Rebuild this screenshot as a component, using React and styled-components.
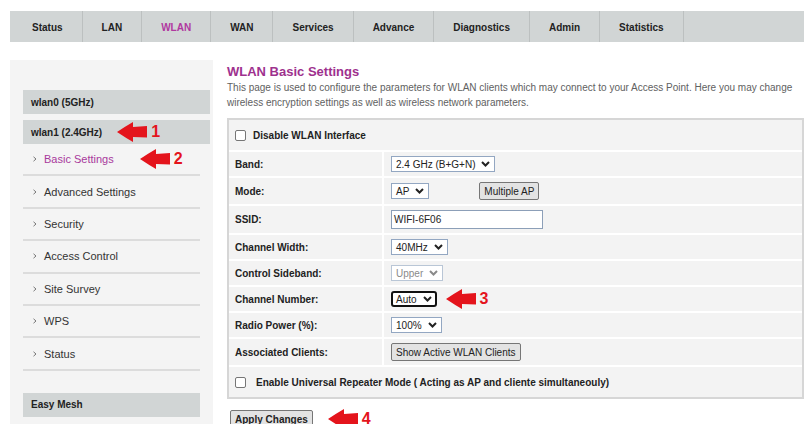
import React from 'react'
import styled, { createGlobalStyle } from 'styled-components'

const GlobalStyle = createGlobalStyle`
  html, body {
    margin: 0;
    padding: 0;
    background: #fff;
    overflow: hidden;
  }
  body {
    font-family: "Liberation Sans", Arial, sans-serif;
    font-size: 10px;
    color: #222;
  }
`

const TopNav = styled.nav`
  display: flex;
  width: 900px;
  height: 31px;
  margin: 11px 0 0 10px;
  padding-left: 3px;
  background: #d1d5d5;
`

const NavItem = styled.div`
  display: flex;
  align-items: center;
  padding: 1px 19px 0;
  border-right: 1px solid #bcc0c0;
  font-weight: bold;
  font-size: 10px;
  color: ${p => (p.$active ? '#b0389f' : '#222')};
`

const Layout = styled.div`
  display: flex;
  align-items: flex-start;
  margin-top: 18px;
  padding-left: 10px;
`

const Sidebar = styled.aside`
  width: 204px;
  min-height: 400px;
  box-sizing: border-box;
  padding: 30px 3px 0 13px;
  background: #f4f4f4;
`

const GroupHeader = styled.div`
  display: flex;
  align-items: center;
  height: 24px;
  padding-left: 8px;
  margin-top: ${p => p.$gap || 0}px;
  margin-right: ${p => p.$inset || 0}px;
  background: #d1d5d5;
  font-weight: bold;
  font-size: 10px;
  color: #222;
`

const SubList = styled.div`
  margin-right: 10px;
`

const SubItem = styled.div`
  display: flex;
  align-items: center;
  gap: 7px;
  height: 30.4px;
  padding-left: 10px;
  border-bottom: 2px solid #dcdcdc;
  font-size: 11px;
  color: ${p => (p.$active ? '#a8399c' : '#333')};
`

const Main = styled.main`
  width: 580px;
  margin-left: 14px;
  padding-top: 4px;
`

const Title = styled.h1`
  margin: 0;
  font-size: 13px;
  line-height: 16px;
  font-weight: bold;
  color: #9e318e;
`

const Intro = styled.p`
  margin: 0;
  font-size: 10px;
  line-height: 15px;
  color: #616161;
`

const Form = styled.div`
  display: grid;
  grid-template-columns: 153px 1fr;
  gap: 2px;
  margin-top: 8px;
  border: 2px solid #d6d6d6;
  background: #fff;
`

const Cell = styled.div`
  display: flex;
  align-items: center;
  min-height: 16px;
  padding: 4px 7px;
  background: #f3f3f3;
`

const Label = styled(Cell)`
  padding-left: 6px;
  font-weight: bold;
  color: #222;
`

const WideRow = styled(Cell)`
  grid-column: 1 / -1;
  gap: ${p => p.$gap}px;
  padding: ${p => p.$pad}px 6px;
  font-weight: bold;
`

const Check = styled.span`
  width: 11px;
  height: 11px;
  box-sizing: border-box;
  border: 1px solid #767676;
  border-radius: 2px;
  background: #fff;
`

const SelectBox = styled.span`
  display: inline-flex;
  align-items: center;
  gap: 6px;
  height: 16px;
  box-sizing: border-box;
  padding: 0 ${p => (p.$focused ? 3 : 4)}px;
  border: ${p =>
    p.$focused ? '2px solid #111' : p.$disabled ? '1px solid #b9c6d6' : '1px solid #93a7c2'};
  border-radius: ${p => (p.$focused ? '3px' : '0')};
  background: #fff;
  font-size: 10px;
  color: ${p => (p.$disabled ? '#8a8a8a' : '#222')};
`

const TextInput = styled.span`
  display: inline-flex;
  align-items: center;
  width: 152px;
  height: 19px;
  box-sizing: border-box;
  padding: 0 2px;
  border: 1px solid #8c9fb8;
  background: #fff;
  font-size: 10px;
  color: #222;
`

const Button = styled.button`
  display: inline-flex;
  align-items: center;
  height: 18px;
  margin-left: ${p => p.$offset || 0}px;
  padding: 0 4px;
  border: 1px solid #767676;
  border-radius: 2px;
  background: #e3e3e3;
  font-family: inherit;
  font-size: 10px;
  font-weight: ${p => (p.$bold ? 'bold' : 'normal')};
  color: #222;
`

const Footer = styled.div`
  display: flex;
  align-items: center;
  margin-top: 11px;
  padding-left: 3px;
`

const Callout = styled.span`
  display: inline-flex;
  align-items: center;
  gap: 3px;
  height: 16px;
  margin-left: ${p => p.$gap}px;
  color: #e4141c;
  font-size: 16px;
  font-weight: bold;
  line-height: 1;
`

function Chevron() {
  return (
    <svg width="9" height="6" viewBox="0 0 9 6">
      <path d="M1 1l3.5 3.5L8 1" fill="none" stroke="currentColor" strokeWidth="2" />
    </svg>
  )
}

function Bullet() {
  return (
    <svg width="4" height="6" viewBox="0 0 4 6">
      <path d="M0.5 0.8L3 3L0.5 5.2" fill="none" stroke="#777" strokeWidth="1" />
    </svg>
  )
}

function Marker({ n, gap }) {
  return (
    <Callout $gap={gap}>
      <svg width="31" height="20" viewBox="0 0 31 20">
        <path d="M0 10Q9 4 16 0L16 5L30 4L30 15.5L16 15L16 20Q9 16 0 10Z" fill="#e4141c" />
      </svg>
      {n}
    </Callout>
  )
}

function Select({ value, focused, disabled }) {
  return (
    <SelectBox $focused={focused} $disabled={disabled}>
      {value}
      <Chevron />
    </SelectBox>
  )
}

const tabs = ['Status', 'LAN', 'WLAN', 'WAN', 'Services', 'Advance', 'Diagnostics', 'Admin', 'Statistics']
const pages = ['Basic Settings', 'Advanced Settings', 'Security', 'Access Control', 'Site Survey', 'WPS', 'Status']

export default function App() {
  return (
    <>
      <GlobalStyle />
      <TopNav>
        {tabs.map(t => (
          <NavItem key={t} $active={t === 'WLAN'}>{t}</NavItem>
        ))}
      </TopNav>
      <Layout>
        <Sidebar>
          <GroupHeader>wlan0 (5GHz)</GroupHeader>
          <GroupHeader $gap={6}>
            wlan1 (2.4GHz)
            <Marker n="1" gap={15} />
          </GroupHeader>
          <SubList>
            {pages.map((p, i) => (
              <SubItem key={p} $active={i === 0}>
                <Bullet />
                {p}
                {i === 0 && <Marker n="2" gap={19} />}
              </SubItem>
            ))}
          </SubList>
          <GroupHeader $gap={22} $inset={10}>Easy Mesh</GroupHeader>
        </Sidebar>
        <Main>
          <Title>WLAN Basic Settings</Title>
          <Intro>
            This page is used to configure the parameters for WLAN clients which may connect to your Access Point. Here you may change wireless encryption settings as well as wireless network parameters.
          </Intro>
          <Form>
            <WideRow $pad={7} $gap={7}>
              <Check />
              Disable WLAN Interface
            </WideRow>

            <Label>Band:</Label>
            <Cell><Select value="2.4 GHz (B+G+N)" /></Cell>

            <Label>Mode:</Label>
            <Cell>
              <Select value="AP" />
              <Button $offset={50}>Multiple AP</Button>
            </Cell>

            <Label>SSID:</Label>
            <Cell><TextInput>WIFI-6F06</TextInput></Cell>

            <Label>Channel Width:</Label>
            <Cell><Select value="40MHz" /></Cell>

            <Label>Control Sideband:</Label>
            <Cell><Select value="Upper" disabled /></Cell>

            <Label>Channel Number:</Label>
            <Cell>
              <Select value="Auto" focused />
              <Marker n="3" gap={9} />
            </Cell>

            <Label>Radio Power (%):</Label>
            <Cell><Select value="100%" /></Cell>

            <Label>Associated Clients:</Label>
            <Cell><Button>Show Active WLAN Clients</Button></Cell>

            <WideRow $pad={7} $gap={10}>
              <Check />
              Enable Universal Repeater Mode ( Acting as AP and cliente simultaneouly)
            </WideRow>
          </Form>
          <Footer>
            <Button $bold>Apply Changes</Button>
            <Marker n="4" gap={15} />
          </Footer>
        </Main>
      </Layout>
    </>
  )
}
